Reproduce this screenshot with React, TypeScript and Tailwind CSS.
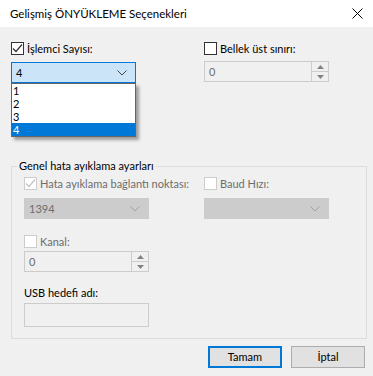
import React from "react";

const Check = ({ color }: { color: string }) => (
  <svg width="11" height="11" viewBox="0 0 11 11" className="block">
    <path d="M1 5.5 L4 8.5 L10 1.5" fill="none" stroke={color} strokeWidth="1.2" />
  </svg>
);

const Box = ({ checked, disabled }: { checked?: boolean; disabled?: boolean }) => (
  <div
    className={
      "w-[13px] h-[13px] shrink-0 flex items-center justify-center bg-white border " +
      (disabled ? "border-[#cccccc]" : "border-[#333333]")
    }
  >
    {checked && <Check color={disabled ? "#c4c4c4" : "#333333"} />}
  </div>
);

const Chevron = ({ color }: { color: string }) => (
  <svg width="10" height="6" viewBox="0 0 10 6" className="block">
    <path d="M0.5 0.5 L5 5 L9.5 0.5" fill="none" stroke={color} strokeWidth="1" />
  </svg>
);

const Spin = ({ value }: { value: string }) => (
  <div className="w-[125px] h-[21px] border border-[#cccccc] bg-[#f0f0f0] flex">
    <div className="flex-1 pl-[4px] flex items-center text-[#6d6d6d]">{value}</div>
    <div className="w-[17px] flex flex-col">
      <div className="flex-1 border-l border-b border-[#cccccc] bg-[#f0f0f0] flex items-center justify-center">
        <svg width="7" height="4" viewBox="0 0 7 4" className="block"><path d="M0 4 L3.5 0 L7 4 Z" fill="#838383" /></svg>
      </div>
      <div className="flex-1 border-l border-[#cccccc] bg-[#f0f0f0] flex items-center justify-center">
        <svg width="7" height="4" viewBox="0 0 7 4" className="block"><path d="M0 0 L3.5 4 L7 0 Z" fill="#838383" /></svg>
      </div>
    </div>
  </div>
);

const DisabledCombo = ({ value }: { value: string }) => (
  <div className="w-[125px] h-[21px] border border-[#cccccc] bg-[#cccccc] flex items-center justify-between pl-[4px] pr-[8px] text-[#6d6d6d]">
    <span>{value}</span>
    <Chevron color="#a0a0a0" />
  </div>
);

export default function App() {
  return (
    <div
      className="w-[373px] h-[376px] bg-[#f0f0f0] text-[11px] leading-[14px] text-black"
      style={{ fontFamily: "Lato, 'Noto Sans', sans-serif" }}
    >
      <div className="h-[27px] bg-white flex items-center justify-between pl-[10px] pr-[8px]">
        <span className="text-[11.5px]">Gelişmiş ÖNYÜKLEME Seçenekleri</span>
        <svg width="11" height="11" viewBox="0 0 11 11" className="block mr-[2px]">
          <path d="M0.5 0.5 L10.5 10.5 M10.5 0.5 L0.5 10.5" stroke="#000" strokeWidth="1" />
        </svg>
      </div>

      <div className="pl-[11px] pt-[15px]">
        <div className="flex">
          <div className="w-[125px]">
            <div className="flex items-center h-[13px] gap-[3px]">
              <Box checked />
              <span>İşlemci Sayısı:</span>
            </div>
            <div className="relative mt-[7px]">
              <div className="h-[21px] border border-[#0078d7] bg-[#cce4f7] flex items-center justify-between pl-[4px] pr-[8px]">
                <span>4</span>
                <Chevron color="#444444" />
              </div>
              <div className="absolute left-0 top-[21px] w-[125px] bg-white border border-[#646464] shadow-[3px_3px_3px_rgba(0,0,0,0.35)] z-10">
                <div className="h-[13px] leading-[13px] pl-[1px]">1</div>
                <div className="h-[13px] leading-[13px] pl-[1px]">2</div>
                <div className="h-[13px] leading-[13px] pl-[1px]">3</div>
                <div className="h-[13px] leading-[13px] pl-[1px] bg-[#0078d7] text-white">4</div>
              </div>
            </div>
          </div>
          <div className="ml-[68px]">
            <div className="flex items-center h-[13px] gap-[3px]">
              <Box />
              <span>Bellek üst sınırı:</span>
            </div>
            <div className="mt-[6px]">
              <Spin value="0" />
            </div>
          </div>
        </div>

        <fieldset className="mt-[76px] w-[356px] h-[180px] border border-[#dcdcdc] pl-[12px]">
          <legend className="ml-[-7px] px-[2px]">Genel hata ayıklama ayarları</legend>
          <div className="flex mt-[4px]">
            <div className="w-[125px]">
              <div className="flex items-center h-[13px] gap-[3px] text-[#6d6d6d] whitespace-nowrap">
                <Box checked disabled />
                <span>Hata ayıklama bağlantı noktası:</span>
              </div>
              <div className="mt-[8px]">
                <DisabledCombo value="1394" />
              </div>
            </div>
            <div className="ml-[55px]">
              <div className="flex items-center h-[13px] gap-[3px] text-[#6d6d6d]">
                <Box disabled />
                <span>Baud Hızı:</span>
              </div>
              <div className="mt-[8px]">
                <DisabledCombo value="" />
              </div>
            </div>
          </div>
          <div className="flex items-center h-[13px] gap-[3px] text-[#6d6d6d] mt-[16px]">
            <Box disabled />
            <span>Kanal:</span>
          </div>
          <div className="mt-[3px]">
            <Spin value="0" />
          </div>
          <div className="mt-[14px] h-[15px]">USB hedefi adı:</div>
          <div className="mt-[2px] w-[125px] h-[24px] border border-[#cccccc] bg-[#f0f0f0]" />
        </fieldset>

        <div className="flex justify-end gap-[9px] pr-[8px] mt-[7px]">
          <button className="w-[74px] h-[22px] border-2 border-[#0078d7] bg-[#e1e1e1] flex items-center justify-center">
            Tamam
          </button>
          <button className="w-[74px] h-[22px] border border-[#adadad] bg-[#e1e1e1] flex items-center justify-center">
            İptal
          </button>
        </div>
      </div>
    </div>
  );
}
